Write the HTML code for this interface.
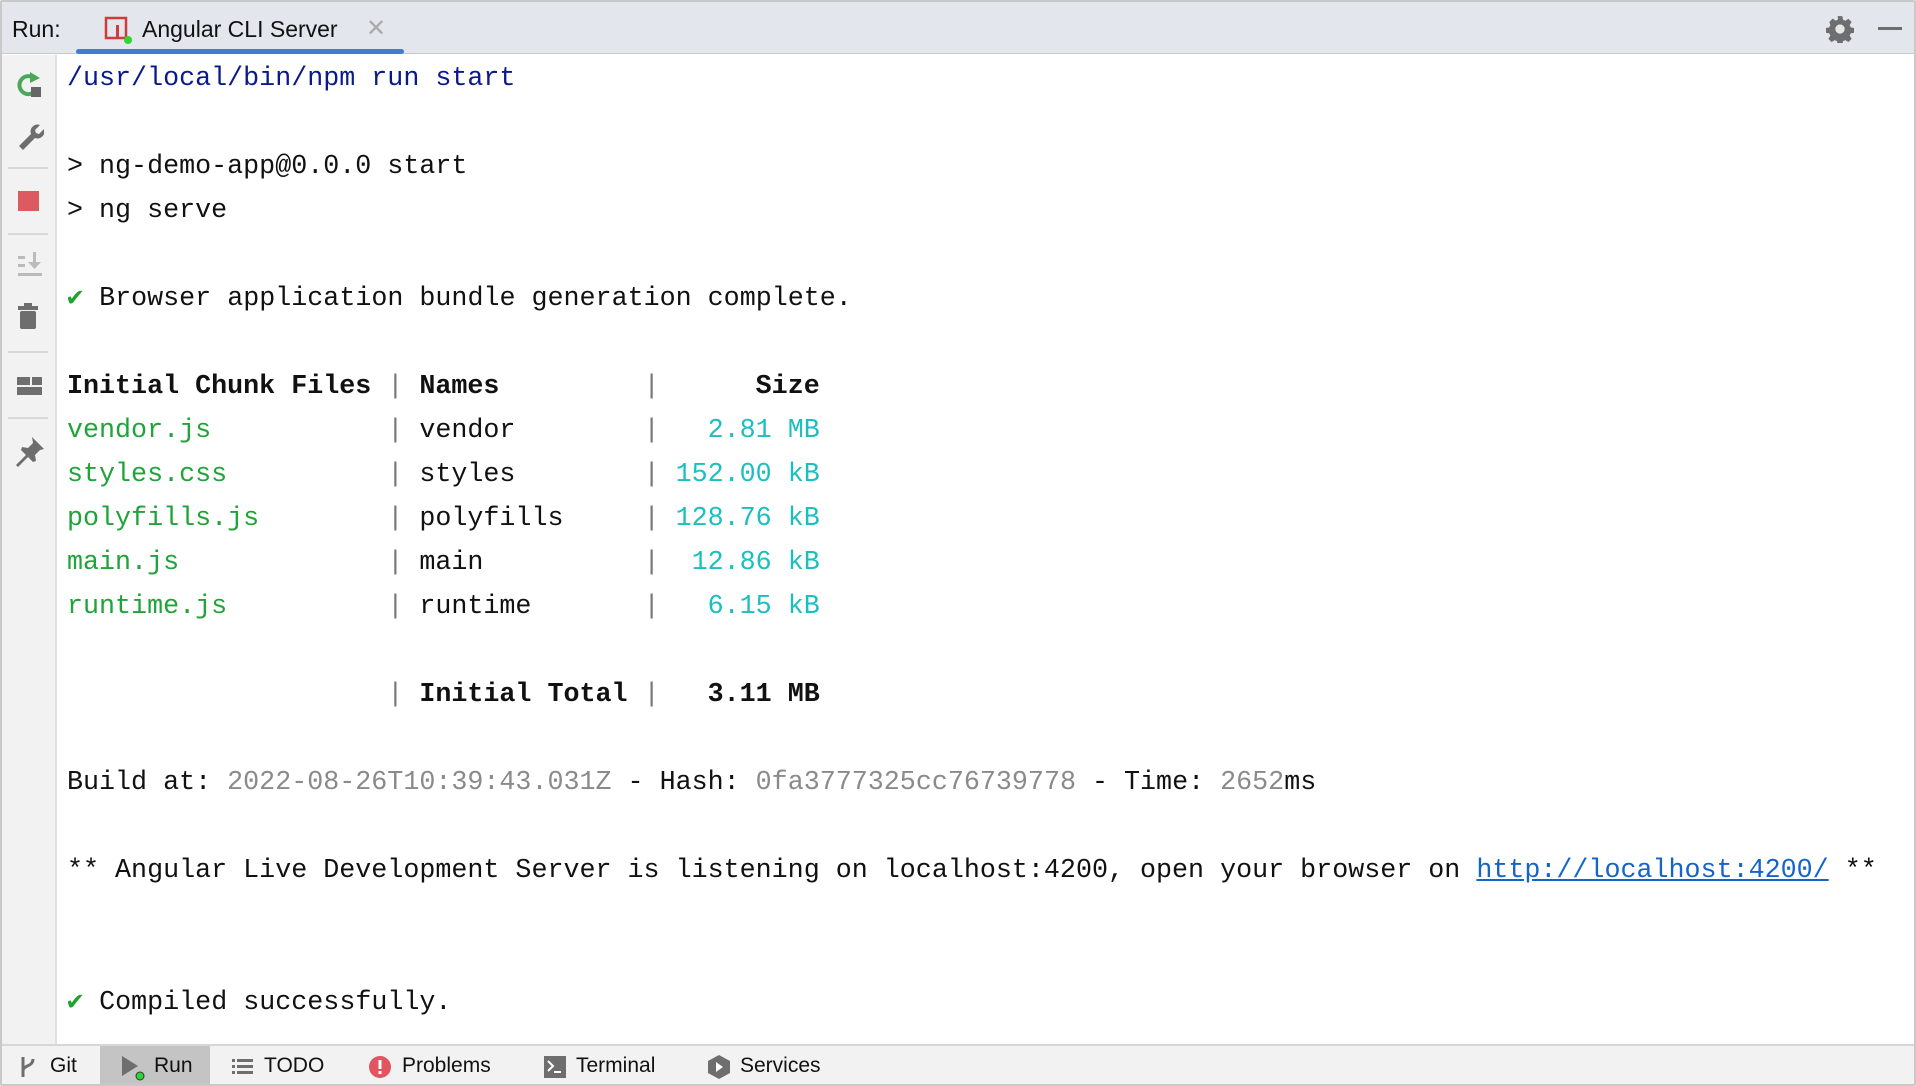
<!DOCTYPE html>
<html><head><meta charset="utf-8"><style>
*{margin:0;padding:0;box-sizing:border-box}
body{width:1916px;height:1086px;overflow:hidden;background:#fff;position:relative;font-family:"Liberation Sans",sans-serif}
.outer{position:absolute;inset:0;border:2px solid #c9c9c9;border-radius:2px}
.top{position:absolute;left:2px;top:2px;right:2px;height:52px;background:#e3e6ed;border-bottom:1px solid #c9c9c9}
.top .run{position:absolute;left:10px;top:14px;font-size:23px;color:#111}
.tab{position:absolute;left:104px;top:14px;font-size:23px;color:#111}
.tabx{position:absolute;left:364px;top:12px;font-size:24px;color:#aaa}
.uline{position:absolute;left:76px;top:49px;width:328px;height:5px;background:#3f7fd0;border-radius:3px}
.side{position:absolute;left:2px;top:55px;width:55px;bottom:42px;background:#f2f2f2;border-right:2px solid #e0e0e0}
.sep{position:absolute;left:6px;width:40px;height:2px;background:#d8d8d8}
.bottom{position:absolute;left:2px;right:2px;bottom:2px;height:40px;background:#f2f2f2;border-top:2px solid #d6d6d6;font-size:21px;color:#111}
.bottom .it{position:absolute;top:8px}
.con{position:absolute;left:67px;top:57px;font-family:"Liberation Mono",monospace;font-size:26.7px;line-height:44px;white-space:pre;color:#111}
.b{color:#0b1a8a}.g{color:#20a43a}.c{color:#1bbfbf}.gr{color:#8a8a8a}.p{color:#777}.k{color:#1fa32e}
a{color:#1565c8;text-decoration:underline}
b{font-weight:bold}
</style></head><body>
<div class="outer"></div>
<div class="top">
 <div class="run">Run:</div>
 <svg style="position:absolute;left:102px;top:14px" width="28" height="28" viewBox="0 0 28 28"><rect x="2" y="2" width="20" height="20" fill="none" stroke="#d03a3a" stroke-width="2.5"/><rect x="12" y="9" width="3" height="13" fill="#d03a3a"/><circle cx="24" cy="24" r="4" fill="#2fd62f"/></svg>
 <div class="tab" style="left:140px">Angular CLI Server</div>
 <div class="tabx">✕</div>
 <svg style="position:absolute;left:1824px;top:13px" width="28" height="28" viewBox="0 0 24 24"><path fill="#6e6e6e" d="M10 1h4l.6 3 2 .9 2.6-1.7 2.8 2.8-1.7 2.6.9 2 3 .6v4l-3 .6-.9 2 1.7 2.6-2.8 2.8-2.6-1.7-2 .9-.6 3h-4l-.6-3-2-.9-2.6 1.7-2.8-2.8 1.7-2.6-.9-2-3-.6v-4l3-.6.9-2L2.9 5.9l2.8-2.8 2.6 1.7 2-.9z M12 8a4 4 0 1 0 0 8 4 4 0 1 0 0-8z"/></svg>
 <div style="position:absolute;left:1876px;top:25px;width:24px;height:3px;background:#6e6e6e"></div>
</div>
<div class="uline"></div>
<div class="side">
 <svg style="position:absolute;left:14px;top:15px" width="28" height="30" viewBox="0 0 28 30"><path d="M20 20a9 9 0 1 1-2-12" fill="none" stroke="#4aa85a" stroke-width="4"/><path d="M14 2l10 6-10 5z" fill="#4aa85a"/><rect x="15" y="17" width="10" height="10" fill="#666"/></svg>
 <svg style="position:absolute;left:14px;top:66px" width="28" height="30" viewBox="0 0 28 30"><path d="M3 25l12-12a7 7 0 0 1 9-9l-5 5 1 3 3 1 5-5a7 7 0 0 1-9 9L7 29z" fill="#6e6e6e"/></svg>
 <div class="sep" style="top:112px"></div>
 <div style="position:absolute;left:16px;top:136px;width:21px;height:20px;background:#dc5b61"></div>
 <div class="sep" style="top:178px"></div>
 <svg style="position:absolute;left:14px;top:197px" width="28" height="28" viewBox="0 0 28 28"><g fill="#bbb"><rect x="2" y="4" width="7" height="3"/><rect x="2" y="12" width="7" height="3"/><rect x="2" y="21" width="24" height="3"/><rect x="17" y="0" width="3" height="12"/><path d="M12 10h13l-6.5 7z"/></g></svg>
 <svg style="position:absolute;left:15px;top:248px" width="24" height="30" viewBox="0 0 24 30"><g fill="#6e6e6e"><rect x="1" y="3" width="20" height="4"/><rect x="7" y="0" width="8" height="3"/><rect x="3" y="8" width="16" height="18" rx="2"/></g></svg>
 <div class="sep" style="top:296px"></div>
 <svg style="position:absolute;left:14px;top:320px" width="28" height="24" viewBox="0 0 28 24"><g fill="#6e6e6e"><rect x="1" y="2" width="13" height="8"/><rect x="16" y="2" width="10" height="8"/><rect x="1" y="12" width="25" height="8"/></g></svg>
 <div class="sep" style="top:362px"></div>
 <svg style="position:absolute;left:12px;top:380px" width="32" height="32" viewBox="0 0 32 32"><path d="M18 2l12 12-4 1-5 5 1 6-3 1-5-5-10 10-2-2 10-10-5-5 1-3 6 1 5-5z" fill="#6e6e6e"/></svg>
</div>
<div class="con"><span class="b">/usr/local/bin/npm run start</span>

&gt; ng-demo-app@0.0.0 start
&gt; ng serve

<span class="k">✔</span> Browser application bundle generation complete.

<b>Initial Chunk Files</b> <span class="p">|</span> <b>Names</b>         <span class="p">|</span>      <b>Size</b>
<span class="g">vendor.js</span>           <span class="p">|</span> vendor        <span class="p">|</span> <span class="c">  2.81 MB</span>
<span class="g">styles.css</span>          <span class="p">|</span> styles        <span class="p">|</span> <span class="c">152.00 kB</span>
<span class="g">polyfills.js</span>        <span class="p">|</span> polyfills     <span class="p">|</span> <span class="c">128.76 kB</span>
<span class="g">main.js</span>             <span class="p">|</span> main          <span class="p">|</span> <span class="c"> 12.86 kB</span>
<span class="g">runtime.js</span>          <span class="p">|</span> runtime       <span class="p">|</span> <span class="c">  6.15 kB</span>

                    <span class="p">|</span> <b>Initial Total</b> <span class="p">|</span>   <b>3.11 MB</b>

Build at: <span class="gr">2022-08-26T10:39:43.031Z</span> - Hash: <span class="gr">0fa3777325cc76739778</span> - Time: <span class="gr">2652</span>ms

** Angular Live Development Server is listening on localhost:4200, open your browser on <a>http://localhost:4200/</a> **


<span class="k">✔</span> Compiled successfully.</div>
<div class="bottom">
 <div style="position:absolute;left:98px;top:0;width:110px;height:38px;background:#c4c4c4"></div>
 <svg class="it" style="left:16px;top:9px" width="20" height="24" viewBox="0 0 20 24"><path d="M5 2v20M5 16c0-6 10-4 10-12" fill="none" stroke="#6e6e6e" stroke-width="3"/></svg>
 <div class="it" style="left:48px">Git</div>
 <svg class="it" style="left:118px;top:9px" width="26" height="26" viewBox="0 0 26 26"><path d="M2 1l16 10L2 21z" fill="#6e6e6e"/><circle cx="20" cy="21" r="4" fill="#2fd62f" stroke="#333" stroke-width="1"/></svg>
 <div class="it" style="left:152px">Run</div>
 <svg class="it" style="left:230px;top:12px" width="22" height="18" viewBox="0 0 22 18"><g fill="#6e6e6e"><rect x="0" y="1" width="3" height="3"/><rect x="5" y="1" width="16" height="3"/><rect x="0" y="7" width="3" height="3"/><rect x="5" y="7" width="16" height="3"/><rect x="0" y="13" width="3" height="3"/><rect x="5" y="13" width="16" height="3"/></g></svg>
 <div class="it" style="left:262px">TODO</div>
 <svg class="it" style="left:366px;top:9px" width="24" height="24" viewBox="0 0 24 24"><circle cx="12" cy="12" r="11" fill="#e05560"/><rect x="10.5" y="5" width="3" height="9" fill="#fff"/><rect x="10.5" y="16" width="3" height="3" fill="#fff"/></svg>
 <div class="it" style="left:400px">Problems</div>
 <svg class="it" style="left:541px;top:9px" width="24" height="24" viewBox="0 0 24 24"><rect x="1" y="1" width="22" height="22" fill="#6e6e6e"/><path d="M5 6l5 5-5 5" fill="none" stroke="#fff" stroke-width="2"/><rect x="11" y="16" width="7" height="2" fill="#fff"/></svg>
 <div class="it" style="left:574px">Terminal</div>
 <svg class="it" style="left:704px;top:8px" width="26" height="26" viewBox="0 0 26 26"><path d="M13 1l11 6v12l-11 6-11-6V7z" fill="#6e6e6e"/><path d="M10 8l7 5-7 5z" fill="#fff"/></svg>
 <div class="it" style="left:738px">Services</div>
</div>
</body></html>
